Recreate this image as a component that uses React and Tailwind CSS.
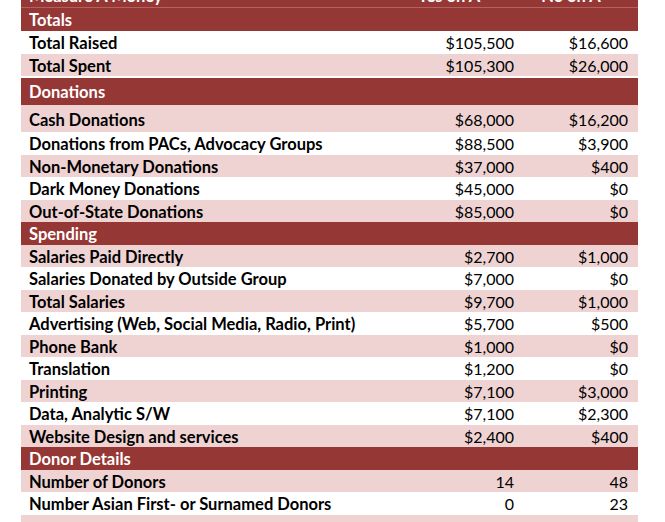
import React from 'react';

const rows = [
  { type: 'section', label: 'Totals', h: 'h-[23px]' },
  { label: 'Total Raised', yes: '$105,500', no: '$16,600', shade: false, h: 'h-[22.5px]' },
  { label: 'Total Spent', yes: '$105,300', no: '$26,000', shade: true, h: 'h-[22.5px]' },
  { type: 'gap' },
  { type: 'section', label: 'Donations', h: 'h-[27px]' },
  { label: 'Cash Donations', yes: '$68,000', no: '$16,200', shade: true, h: 'h-[27px]' },
  { label: 'Donations from PACs, Advocacy Groups', yes: '$88,500', no: '$3,900', shade: false },
  { label: 'Non-Monetary Donations', yes: '$37,000', no: '$400', shade: true },
  { label: 'Dark Money Donations', yes: '$45,000', no: '$0', shade: false },
  { label: 'Out-of-State Donations', yes: '$85,000', no: '$0', shade: true },
  { type: 'section', label: 'Spending' },
  { label: 'Salaries Paid Directly', yes: '$2,700', no: '$1,000', shade: true },
  { label: 'Salaries Donated by Outside Group', yes: '$7,000', no: '$0', shade: false },
  { label: 'Total Salaries', yes: '$9,700', no: '$1,000', shade: true },
  { label: 'Advertising (Web, Social Media, Radio, Print)', yes: '$5,700', no: '$500', shade: false },
  { label: 'Phone Bank', yes: '$1,000', no: '$0', shade: true },
  { label: 'Translation', yes: '$1,200', no: '$0', shade: false },
  { label: 'Printing', yes: '$7,100', no: '$3,000', shade: true },
  { label: 'Data, Analytic S/W', yes: '$7,100', no: '$2,300', shade: false },
  { label: 'Website Design and services', yes: '$2,400', no: '$400', shade: true },
  { type: 'section', label: 'Donor Details' },
  { label: 'Number of Donors', yes: '14', no: '48', shade: true },
  { label: 'Number Asian First- or Surnamed Donors', yes: '0', no: '23', shade: false },
  { label: '', yes: '', no: '', shade: true },
];

const App = () => {
  return (
    <div
      className="w-full h-[522px] overflow-hidden bg-white text-black"
      style={{ fontFamily: 'Lato, "Open Sans", sans-serif' }}
    >
      <div className="ml-[21px] w-[617px] -mt-[15px]">
        <div className="flex items-center h-[23px] bg-[#953735] text-white font-bold text-[16.5px] leading-[20px] pr-[10px] border-b border-[#b4625f]">
          <div className="flex-1 pl-2">Measure A Money</div>
          <div className="w-[130px] text-center">Yes on A</div>
          <div className="w-[114px] text-center">No on A</div>
        </div>
        {rows.map((row, i) => {
          if (row.type === 'gap') {
            return <div key={i} className="h-[2px] bg-white" />;
          }
          if (row.type === 'section') {
            return (
              <div
                key={i}
                className={`flex items-center ${row.h || 'h-[22.5px]'} bg-[#953735] text-white font-bold text-[16.5px] leading-[20px] pl-2 pt-[1px]`}
              >
                {row.label}
              </div>
            );
          }
          return (
            <div
              key={i}
              className={`flex items-center ${row.h || 'h-[22.5px]'} ${row.shade ? 'bg-[#efd3d3]' : 'bg-white'} leading-[20px] pr-[10px] pt-[2px]`}
            >
              <div className="flex flex-1 items-baseline">
                <div className="flex-1 pl-2 font-bold text-[16.5px] whitespace-nowrap">{row.label}</div>
                <div className="w-[130px] text-right text-[16px]">{row.yes}</div>
                <div className="w-[114px] text-right text-[16px]">{row.no}</div>
              </div>
            </div>
          );
        })}
      </div>
    </div>
  );
};

export default App;
